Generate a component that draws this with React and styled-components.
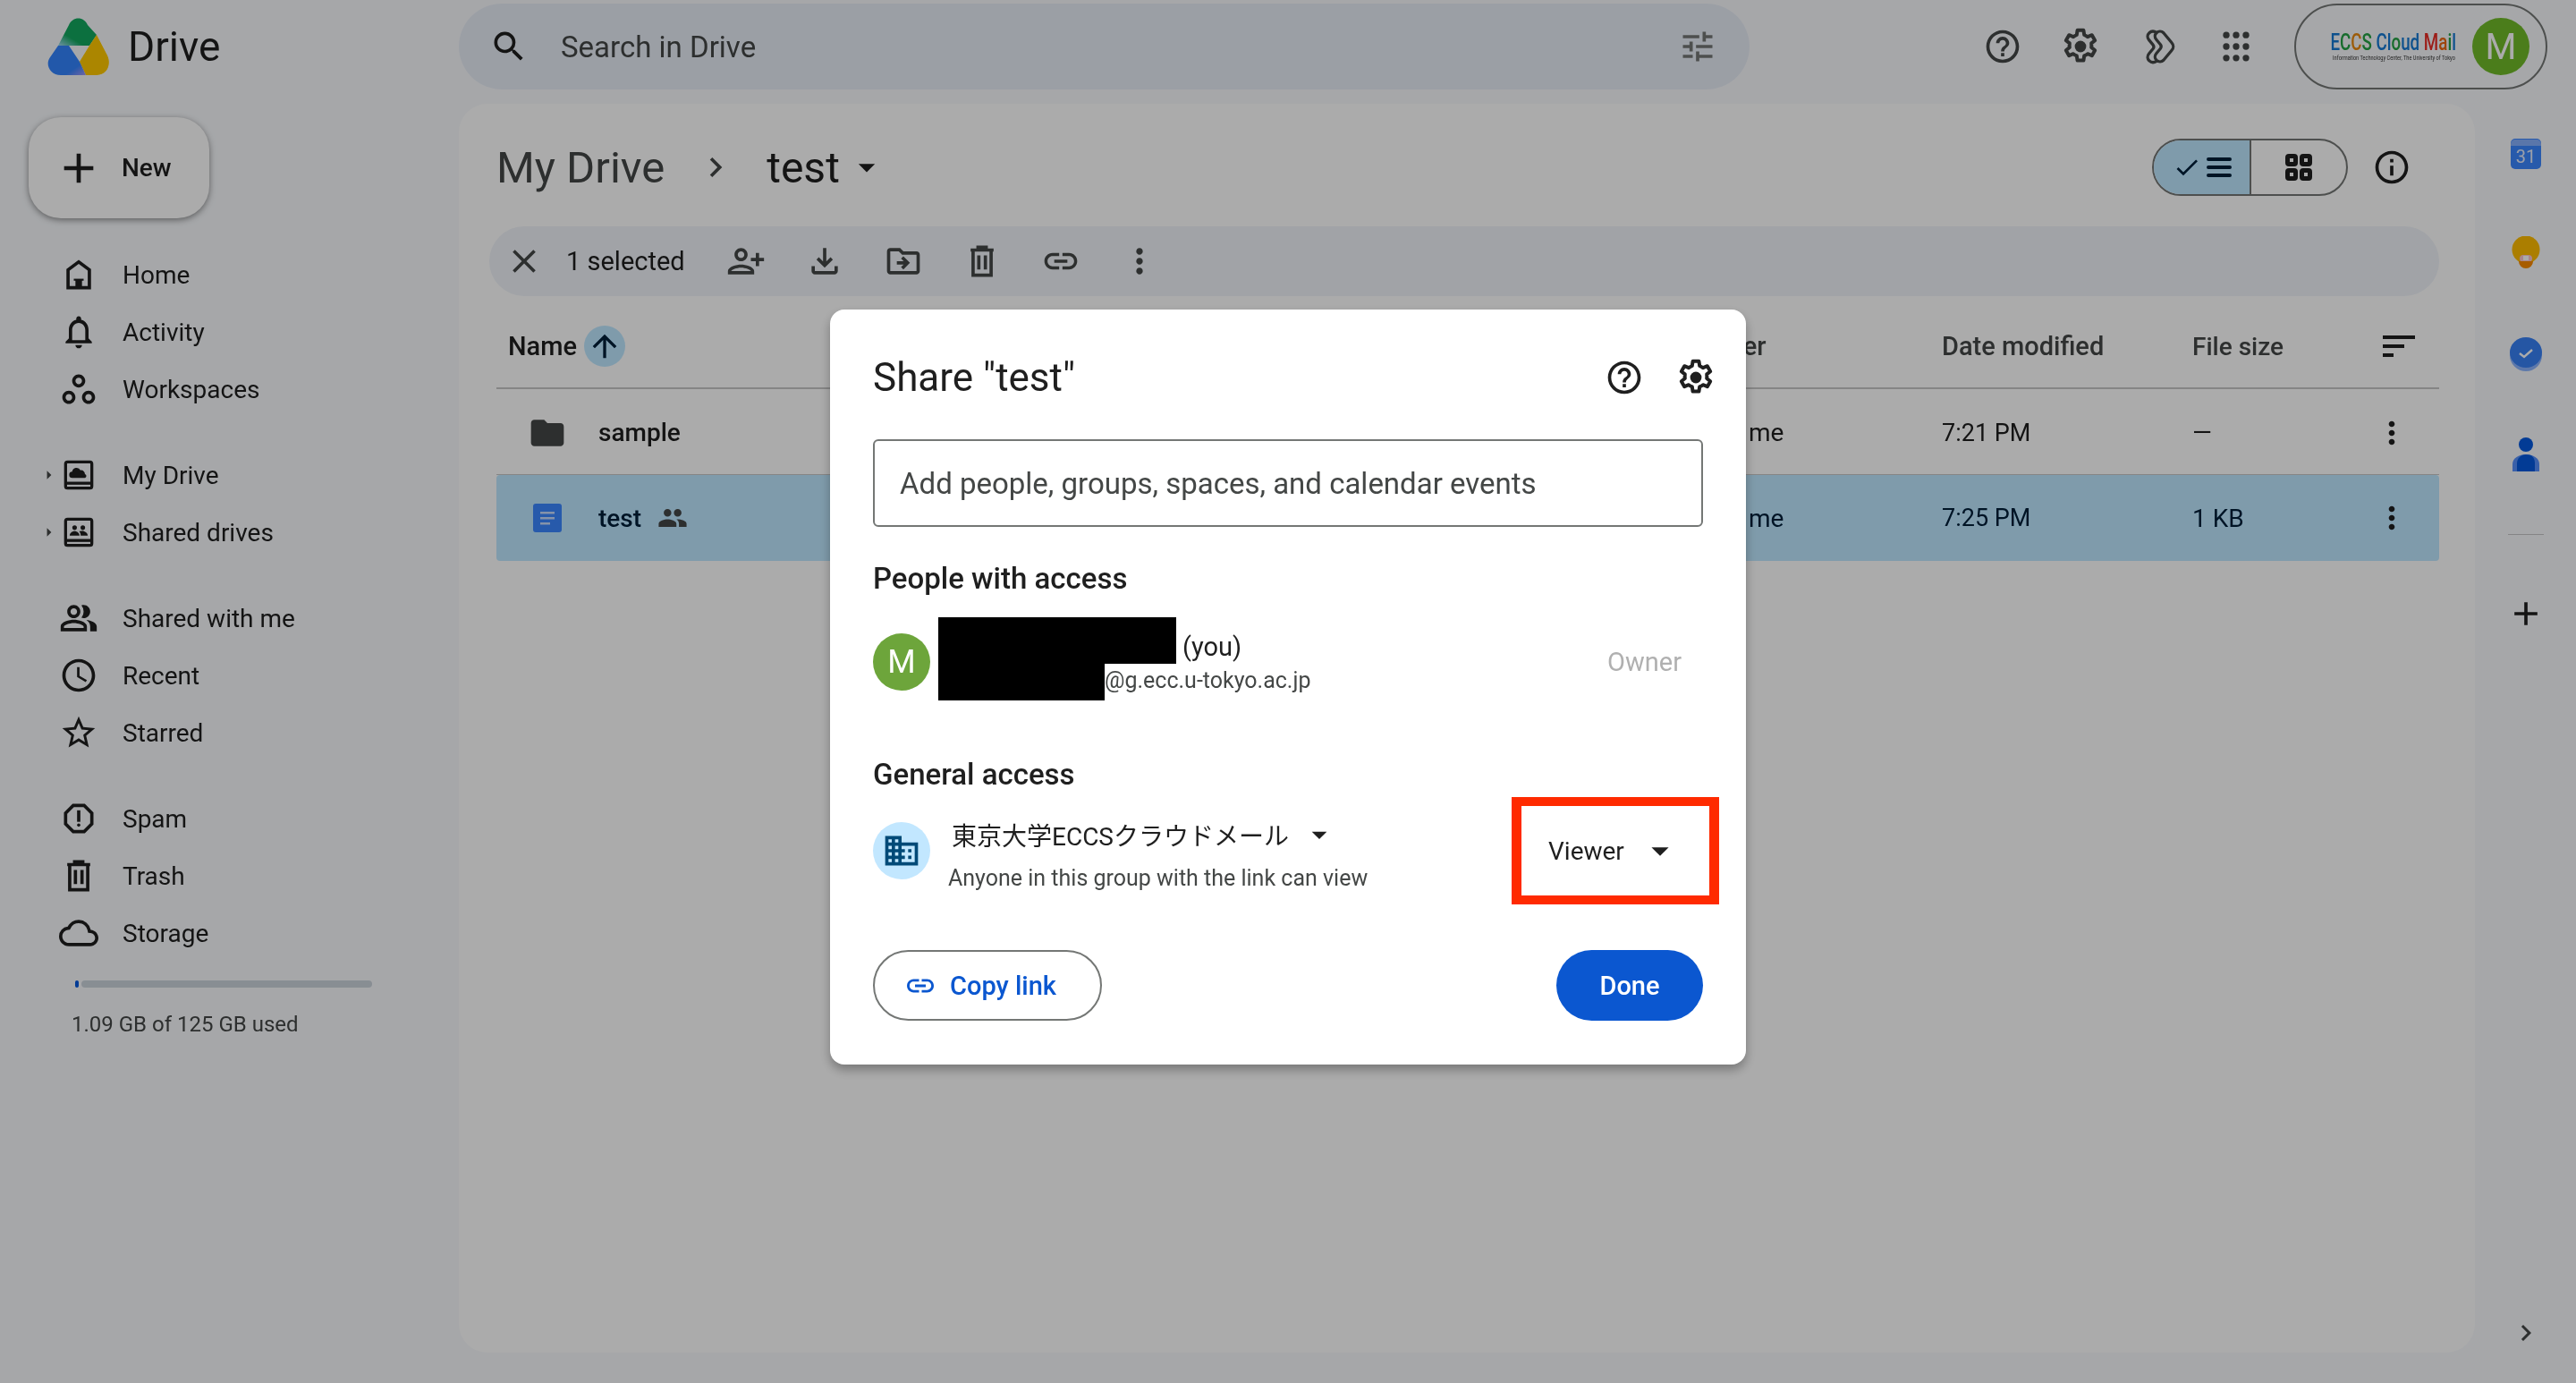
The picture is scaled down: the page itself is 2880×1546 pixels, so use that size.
import React from 'react'
import styled, { createGlobalStyle } from 'styled-components'
import {
  MdAdd,
  MdSearch,
  MdTune,
  MdHelpOutline,
  MdOutlineNotifications,
  MdOutlineWorkspaces,
  MdOutlinePeopleAlt,
  MdAccessTime,
  MdStarBorder,
  MdOutlineReport,
  MdOutlineCloud,
  MdClose,
  MdPersonAddAlt,
  MdOutlineFileDownload,
  MdOutlineDriveFileMove,
  MdLink,
  MdMoreVert,
  MdFolder,
  MdPeople,
  MdArrowUpward,
  MdCheck,
  MdInfoOutline,
  MdArrowDropDown,
  MdArrowRight,
  MdChevronRight,
  MdDomain,
} from 'react-icons/md'

const FONT = `Roboto, "Noto Sans CJK JP", sans-serif`

const GlobalStyle = createGlobalStyle`
  html, body {
    margin: 0;
    height: 100%;
    overflow: hidden;
    background: #f8fafd;
  }
  * {
    box-sizing: border-box;
  }
`

const Page = styled.div`
  width: 2880px;
  height: 1546px;
  display: grid;
  grid-template-columns: 513px 1fr 113px;
  grid-template-rows: 116px 1fr;
  font-family: ${FONT};
  color: #1f1f1f;
  background: #f8fafd;
`

/* ---------- header ---------- */

const Header = styled.header`
  grid-column: 1 / 4;
  display: flex;
  align-items: center;
  padding-bottom: 12px;
  padding-right: 32px;
`

const Brand = styled.div`
  width: 513px;
  padding-left: 53px;
  display: flex;
  align-items: center;
  gap: 21px;
  font-size: 46px;
  color: #1f1f1f;
`

const SearchBar = styled.div`
  width: 1443px;
  height: 96px;
  border-radius: 48px;
  background: #e9eef6;
  display: flex;
  align-items: center;
  padding: 0 36px 0 34px;
  font-size: 33px;
  color: #444746;
`

const SearchText = styled.span`
  flex: 1;
  margin-left: 36px;
`

const HeaderActions = styled.div`
  margin-left: auto;
  display: flex;
  align-items: center;
  gap: 43px;
`

const IconSlot = styled.span`
  display: inline-flex;
  align-items: center;
  justify-content: center;
  flex: none;
  color: ${(p) => p.$color || '#444746'};
  font-size: ${(p) => p.$size || 44}px;
  width: ${(p) => p.$size || 44}px;
  height: ${(p) => p.$size || 44}px;
`

const AccountPill = styled.div`
  width: 283px;
  height: 96px;
  border: 2px solid #747775;
  border-radius: 48px;
  display: flex;
  align-items: center;
  justify-content: space-between;
  padding: 0 18px 0 43px;
  background: #f8fafd;
`

const EccsLogo = styled.div`
  width: 132px;
  display: flex;
  flex-direction: column;
  align-items: center;
`

const EccsName = styled.div`
  font-size: 25px;
  line-height: 26px;
  font-weight: 500;
  white-space: nowrap;
  transform: scaleX(0.75);
`

const EccsLetter = styled.span`
  color: ${(p) => p.$c};
`

const EccsSub = styled.div`
  font-size: 7px;
  line-height: 9px;
  color: #333;
  white-space: nowrap;
  transform: scaleX(0.8);
`

const Avatar = styled.div`
  width: 64px;
  height: 64px;
  border-radius: 50%;
  background: ${(p) => p.$bg || '#6da53b'};
  color: #fff;
  font-size: ${(p) => p.$font || 36}px;
  display: flex;
  align-items: center;
  justify-content: center;
  flex: none;
`

/* ---------- sidebar ---------- */

const Sidebar = styled.nav`
  padding-top: 15px;
`

const NewButton = styled.div`
  width: 202px;
  height: 113px;
  margin-left: 32px;
  margin-bottom: 31px;
  border-radius: 36px;
  background: #fff;
  box-shadow: 0 2px 6px rgba(0, 0, 0, 0.35), 0 2px 12px rgba(0, 0, 0, 0.12);
  display: flex;
  align-items: center;
  gap: 20px;
  padding-left: 28px;
  font-size: 28px;
  font-weight: 500;
`

const NavGroup = styled.div`
  margin-bottom: 32px;
`

const NavRow = styled.div`
  height: 64px;
  padding-left: 43px;
  display: flex;
  align-items: center;
  font-size: 28px;
  color: #1f1f1f;
`

const CaretSlot = styled.span`
  width: 23px;
  display: inline-flex;
  align-items: center;
  justify-content: center;
  font-size: 30px;
  color: #444746;
`

const NavLabel = styled.span`
  margin-left: 27px;
`

const StorageBar = styled.div`
  width: 332px;
  height: 8px;
  margin: -11px 0 0 84px;
  display: flex;
  gap: 3px;
`

const StorageUsed = styled.div`
  width: 4px;
  border-radius: 2px;
  background: #0b57d0;
`

const StorageFree = styled.div`
  flex: 1;
  border-radius: 4px;
  background: #ccd4db;
`

const StorageText = styled.div`
  margin: 24px 0 0 80px;
  font-size: 24px;
  line-height: 34px;
  color: #444746;
`

/* ---------- main panel ---------- */

const MainPanel = styled.main`
  margin-bottom: 34px;
  padding: 5px 40px 0 42px;
  background: #fff;
  border-radius: 32px;
`

const TitleRow = styled.div`
  height: 132px;
  display: flex;
  align-items: center;
`

const Crumb = styled.span`
  font-size: ${(p) => p.$muted ? 49 : 48}px;
  color: ${(p) => p.$muted ? '#444746' : '#1f1f1f'};
`

const CrumbChevron = styled.span`
  display: inline-flex;
  margin: 0 35px;
  font-size: 44px;
  color: #444746;
`

const CrumbCaret = styled.span`
  display: inline-flex;
  margin-left: 8px;
`

const ViewToggle = styled.div`
  margin-left: auto;
  width: 219px;
  height: 64px;
  border: 2px solid #747775;
  border-radius: 32px;
  overflow: hidden;
  display: grid;
  grid-template-columns: 109px 1fr;
`

const ToggleHalf = styled.div`
  display: flex;
  align-items: center;
  justify-content: center;
  gap: 6px;
  background: ${(p) => p.$active ? '#c2e7ff' : 'transparent'};
  border-right: ${(p) => p.$active ? '2px solid #747775' : 'none'};
  color: ${(p) => p.$active ? '#001d35' : '#1f1f1f'};
`

const InfoSlot = styled.div`
  margin: 0 31px 0 27px;
  display: flex;
`

const Toolbar = styled.div`
  height: 78px;
  margin-left: -8px;
  padding-left: 17px;
  border-radius: 39px;
  background: #f0f4f9;
  display: flex;
  align-items: center;
  font-size: 29px;
  color: #444746;
`

const SelectedText = styled.span`
  margin: 0 28px 0 25px;
  width: 151px;
  white-space: nowrap;
  color: #1f1f1f;
`

const ToolIcons = styled.div`
  display: flex;
  gap: 44px;
`

const tableColumns = '1330px 286px 280px 170px 106px'

const TableHead = styled.div`
  height: 104px;
  padding-top: 10px;
  border-bottom: 2px solid #c7c7c7;
  display: grid;
  grid-template-columns: ${tableColumns};
  align-items: center;
  font-size: 29px;
  font-weight: 500;
  color: #444746;
`

const NameHead = styled.div`
  display: flex;
  align-items: center;
  padding-left: 13px;
  gap: 8px;
  color: #1f1f1f;
`

const OwnerHead = styled.div`
  padding-left: 6px;
`

const SizeHead = styled.div`
  font-size: 28px;
`

const SortBadge = styled.span`
  width: 46px;
  height: 46px;
  border-radius: 50%;
  background: #c2e7ff;
  color: #001d35;
  display: inline-flex;
  align-items: center;
  justify-content: center;
  font-size: 40px;
`

const SortLines = styled.div`
  display: flex;
  flex-direction: column;
  gap: 6px;
  margin-left: 43px;
  align-items: flex-start;
`

const SortLine = styled.div`
  height: 4px;
  background: #1f1f1f;
  width: ${(p) => p.$w}px;
`

const FileRow = styled.div`
  height: 96px;
  padding-top: ${(p) => p.$selected ? 0 : 2}px;
  display: grid;
  grid-template-columns: ${tableColumns};
  align-items: center;
  font-size: 28px;
  border-radius: ${(p) => p.$selected ? '4px' : '0'};
  background: ${(p) => p.$selected ? '#c2e7ff' : 'transparent'};
  color: ${(p) => p.$selected ? '#001d35' : '#1f1f1f'};
  border-bottom: ${(p) => p.$selected ? 'none' : '1px solid #c7c7c7'};
`

const NameCell = styled.div`
  display: flex;
  align-items: center;
  padding-left: 35px;
  gap: 35px;
  font-weight: 500;
`

const SharedMark = styled.span`
  display: inline-flex;
  margin-left: -17px;
`

const OwnerCell = styled.div`
  padding-left: 70px;
`

const DateCell = styled.div`
  font-size: 27px;
`

const ActionCell = styled.div`
  display: flex;
  justify-content: center;
`

/* ---------- right rail ---------- */

const Rail = styled.aside`
  display: flex;
  flex-direction: column;
  align-items: center;
`

const RailSlot = styled.div`
  height: 112px;
  width: 100%;
  display: flex;
  align-items: center;
  justify-content: center;
`

const RailDivider = styled.div`
  width: 40px;
  height: 1px;
  margin: 33px 0 32px;
  background: #c7c7c7;
`

const RailBottom = styled.div`
  margin-top: auto;
  margin-bottom: 38px;
  font-size: 36px;
  display: flex;
  color: #444746;
`

/* ---------- dialog ---------- */

const Scrim = styled.div`
  position: fixed;
  inset: 0;
  padding-bottom: 10px;
  background: rgba(0, 0, 0, 0.33);
  backdrop-filter: saturate(1.12);
  display: flex;
  align-items: center;
  justify-content: center;
  font-family: ${FONT};
`

const Dialog = styled.div`
  width: 1024px;
  height: 844px;
  padding: 26px 48px 0;
  background: #fff;
  border-radius: 16px;
  box-shadow: 0 6px 12px rgba(0, 0, 0, 0.3);
  color: #1f1f1f;
`

const DialogTop = styled.div`
  height: 100px;
  display: flex;
  align-items: center;
`

const DialogTitle = styled.h2`
  flex: 1;
  margin: 0;
  font-size: 44px;
  font-weight: 400;
`

const DialogIcons = styled.div`
  display: flex;
  gap: 36px;
  margin-right: -14px;
`

const PeopleInput = styled.div`
  height: 98px;
  margin-top: 19px;
  padding-left: 28px;
  border: 2px solid #747775;
  border-radius: 6px;
  display: flex;
  align-items: center;
  font-size: 33px;
  color: #444746;
`

const SectionTitle = styled.h3`
  margin: ${(p) => p.$top}px 0 0;
  height: 40px;
  line-height: 40px;
  font-size: 33px;
  font-weight: 500;
`

const PersonRow = styled.div`
  height: 93px;
  margin-top: 23px;
  display: flex;
`

const AvatarWrap = styled.div`
  margin-top: 18px;
`

const PersonInfo = styled.div`
  margin-left: 9px;
  display: flex;
  flex-direction: column;
`

const NameLine = styled.div`
  display: flex;
  height: 52px;
  align-items: flex-end;
  font-size: 29px;
`

const MailLine = styled.div`
  display: flex;
  height: 41px;
  align-items: center;
  font-size: 25px;
  color: #444746;
`

const Redaction = styled.div`
  width: ${(p) => p.$w}px;
  height: 100%;
  background: #000;
  flex: none;
`

const MailText = styled.span`
  padding-bottom: 5px;
`

const YouText = styled.span`
  margin-left: 7px;
  line-height: 32px;
  padding-bottom: 3px;
`

const OwnerRole = styled.span`
  margin: 18px 24px 0 auto;
  height: 64px;
  display: flex;
  align-items: center;
  font-size: 29px;
  color: #b0b0b0;
`

const AccessRow = styled.div`
  height: 120px;
  margin-top: 5px;
  margin-right: -18px;
  display: flex;
  align-items: center;
`

const OrgIcon = styled.div`
  width: 64px;
  height: 64px;
  border-radius: 50%;
  background: #c2e7ff;
  color: #004a77;
  display: flex;
  align-items: center;
  justify-content: center;
  font-size: 44px;
  flex: none;
`

const AccessInfo = styled.div`
  flex: 1;
  margin: 10px 0 0 20px;
  display: flex;
  flex-direction: column;
  gap: 12px;
`

const OrgName = styled.div`
  height: 40px;
  padding-left: 4px;
  display: flex;
  align-items: center;
  font-size: 28px;
`

const OrgCaret = styled.span`
  display: inline-flex;
  margin-left: 14px;
  font-size: 40px;
`

const AccessHint = styled.div`
  height: 34px;
  line-height: 34px;
  font-size: 25px;
  color: #444746;
`

/* the red frame is the annotation the author drew around the role picker */
const RolePicker = styled.div`
  width: 232px;
  height: 120px;
  padding-left: 30px;
  border: solid #ff2a00;
  border-width: 10px 11px;
  display: flex;
  align-items: center;
  font-size: 28px;
`

const RoleCaret = styled.span`
  display: inline-flex;
  margin-left: 17px;
  font-size: 46px;
`

const DialogButtons = styled.div`
  margin-top: 51px;
  display: flex;
  justify-content: space-between;
`

const CopyButton = styled.div`
  width: 256px;
  height: 79px;
  border: 2px solid #747775;
  border-radius: 40px;
  display: flex;
  align-items: center;
  gap: 15px;
  padding-left: 33px;
  font-size: 29px;
  font-weight: 500;
  color: #0b57d0;
`

const DoneButton = styled.div`
  width: 164px;
  height: 79px;
  border-radius: 40px;
  background: #0b57d0;
  color: #fff;
  display: flex;
  align-items: center;
  justify-content: center;
  font-size: 29px;
  font-weight: 500;
`

/* ---------- drawn icons ---------- */

const DriveLogo = () => (
  <svg width="69" height="65" viewBox="0 0 69 65">
    <defs>
      <linearGradient id="lg-green" x1="0" y1="1" x2="0.5" y2="0.4">
        <stop offset="0" stopColor="#a8d8f0" />
        <stop offset="0.55" stopColor="#1fa463" />
      </linearGradient>
      <linearGradient id="lg-blue" x1="0.4" y1="0.3" x2="1" y2="1">
        <stop offset="0.6" stopColor="#3b82f0" />
        <stop offset="1" stopColor="#a99bf0" />
      </linearGradient>
    </defs>
    <path d="M12 31 24 8C28 -2 41 -2 45 8L55 19 47 31Z" fill="url(#lg-green)" />
    <path d="M55 19 67 42C72 53 66 64 55 64H43L36 49 47 31Z" fill="#fdc800" />
    <path d="M12 31H24L36 49 43 64H15C3 64 -3 52 3 44Z" fill="url(#lg-blue)" />
  </svg>
)

const HomeIcon = () => (
  <svg width="44" height="44" viewBox="0 0 24 24" fill="currentColor">
    <path d="M12 3 4.500 8.600V21h15V8.600L12 3Zm5.500 16h-11V9.600L12 5.500l5.500 4.100V19Z" />
    <rect x="10" y="15" width="4" height="5" />
    <rect x="9" y="14.500" width="6" height="1.200" />
  </svg>
)

const DriveBox = ({ children }) => (
  <svg width="44" height="44" viewBox="0 0 24 24" fill="none" stroke="currentColor" strokeWidth="1.800">
    <rect x="4" y="4" width="16" height="16" rx="1.200" />
    <path d="M4 17h16" />
    {children}
  </svg>
)

const MyDriveIcon = () => (
  <DriveBox>
    <path
      d="M8.200 13.800a1.900 1.900 0 0 1-.2-3.800 2.700 2.700 0 0 1 5.100-.9 2.300 2.300 0 0 1 2.700 2.300 1.300 1.300 0 0 1 .1 2.400Z"
      fill="currentColor"
      stroke="none"
    />
  </DriveBox>
)

const SharedDrivesIcon = () => (
  <DriveBox>
    <g fill="currentColor" stroke="none">
      <circle cx="9.500" cy="9.200" r="1.400" />
      <circle cx="14.500" cy="9.200" r="1.400" />
      <path d="M6.500 14c0-1.500 1.500-2.700 3-2.700s3 1.200 3 2.700ZM13.200 14c0-1-.3-1.900-.9-2.500.7-.2 2.200-.4 3-.1 1.200.3 2.200 1.300 2.200 2.600Z" />
    </g>
  </DriveBox>
)

const GearIcon = () => (
  <svg width="44" height="44" viewBox="1 1 22 22" fill="none" stroke="currentColor" strokeWidth="2" strokeLinejoin="round">
    <path d="M10.300 2.900h3.400l.4 2.600c.7.300 1.300.6 1.900 1.100l2.400-1 1.700 3-2 1.600c.1.800.1 1.500 0 2.300l2 1.600-1.700 3-2.400-1c-.6.500-1.200.8-1.900 1.100l-.4 2.600h-3.400l-.4-2.600c-.7-.3-1.300-.6-1.900-1.100l-2.400 1-1.700-3 2-1.600c-.1-.8-.1-1.500 0-2.300l-2-1.600 1.700-3 2.400 1c.6-.5 1.200-.8 1.900-1.100l.4-2.600Z" />
    <circle cx="12" cy="12" r="3.200" fill="currentColor" stroke="none" />
  </svg>
)

const GeminiIcon = () => (
  <svg width="44" height="44" viewBox="0 0 24 24" fill="none" stroke="currentColor" strokeWidth="1.800" strokeLinejoin="round" strokeLinecap="round">
    <path d="M11 3.500c1.200-1 3-1 4.200.2l5 6c1.200 1.300 1.200 3.300 0 4.600l-5 6c-1.200 1.200-3 1.200-4.200.2-1.300-1.200-1.300-3-.2-4.300l2.500-3c.6-.8.6-1.600 0-2.400l-2.500-3c-1.100-1.300-1.100-3.100.2-4.300Z" />
    <path d="M11 3.500C9.500 2.500 7.700 2.500 6.500 3.700 5.200 4.900 5.200 6.700 6.300 8l2.500 3c.6.8.6 1.600 0 2.400l-2.500 3c-1.100 1.300-1.100 3.100.2 4.300 1.200 1.200 3 1.200 4.500.2" />
  </svg>
)

const AppsIcon = () => (
  <svg width="44" height="44" viewBox="0 0 24 24" fill="currentColor">
    {[5, 12, 19].map((cy) =>
      [6, 12, 18].map((cx) => <circle key={`${cx}-${cy}`} cx={cx} cy={cy} r="2" />),
    )}
  </svg>
)

const TrashIcon = () => (
  <svg width="44" height="44" viewBox="0 0 24 24" fill="none" stroke="currentColor" strokeWidth="2">
    <path d="M5 5.200h14M9.500 5V3.400h5V5M6.500 5.200V20.500h11V5.200" />
    <path d="M10 8.500v8.500M14 8.500v8.500" />
  </svg>
)

const ListBars = () => (
  <svg width="28" height="24" viewBox="0 0 28 24" fill="none" stroke="currentColor" strokeWidth="4" strokeLinecap="round">
    <path d="M2 3h24M2 12h24M2 21h24" />
  </svg>
)

const GridSquares = () => (
  <svg width="30" height="30" viewBox="0 0 30 30" fill="none" stroke="currentColor" strokeWidth="5">
    <rect x="2.500" y="2.500" width="9" height="9" rx="1.500" />
    <rect x="18.500" y="2.500" width="9" height="9" rx="1.500" />
    <rect x="2.500" y="18.500" width="9" height="9" rx="1.500" />
    <rect x="18.500" y="18.500" width="9" height="9" rx="1.500" />
  </svg>
)

const DocsIcon = () => (
  <svg width="32" height="32" viewBox="0 0 32 32">
    <rect width="32" height="32" rx="3" fill="#4285f4" />
    <path d="M8 9h16v2.600H8zM8 15h16v2.600H8zM8 21h11v2.600H8z" fill="#c9dcf9" />
  </svg>
)

const CalendarIcon = () => (
  <svg width="34" height="34" viewBox="0 0 34 34">
    <rect width="34" height="34" rx="5" fill="#4285f4" />
    <path d="M0 6a5 5 0 0 1 5-5h24a5 5 0 0 1 5 5v2H0Z" fill="#8ab0f5" />
    <text x="17" y="27" textAnchor="middle" fontSize="20" fontFamily="Roboto, sans-serif" fill="#e8eefb">31</text>
  </svg>
)

const KeepIcon = () => (
  <svg width="32" height="40" viewBox="0 0 32 40">
    <circle cx="16" cy="15" r="15.500" fill="#fbbc04" />
    <rect x="9" y="21" width="14" height="8" rx="4" fill="#f8c8d0" />
    <path d="M8 28h16a8 8 0 0 1-16 0Z" fill="#ee8a00" />
    <rect x="13" y="22" width="6" height="5" fill="#fff" />
  </svg>
)

const TasksIcon = () => (
  <svg width="36" height="38" viewBox="0 0 36 38">
    <ellipse cx="18" cy="20" rx="18" ry="18" fill="#8fb4f6" />
    <ellipse cx="18" cy="17" rx="18" ry="17" fill="#3f7fe8" />
    <path d="M11 18l5 4 9-8" fill="none" stroke="#fff" strokeWidth="2.400" />
  </svg>
)

const ContactsIcon = () => (
  <svg width="30" height="38" viewBox="0 0 30 38">
    <circle cx="15" cy="8" r="8" fill="#0b57d0" />
    <path d="M0 38v-8c0-7 7-11 15-11s15 4 15 11v8Z" fill="#5b8ff0" />
    <path d="M5 38v-9c0-6 5-10 10-10 8 0 10 5 10 10v9Z" fill="#0b57d0" />
  </svg>
)

/* ---------- data ---------- */

const navGroups = [
  [
    [<HomeIcon />, 'Home'],
    [<MdOutlineNotifications />, 'Activity'],
    [<MdOutlineWorkspaces />, 'Workspaces'],
  ],
  [
    [<MyDriveIcon />, 'My Drive', true],
    [<SharedDrivesIcon />, 'Shared drives', true],
  ],
  [
    [<MdOutlinePeopleAlt />, 'Shared with me'],
    [<MdAccessTime />, 'Recent'],
    [<MdStarBorder />, 'Starred'],
  ],
  [
    [<MdOutlineReport />, 'Spam'],
    [<TrashIcon />, 'Trash'],
    [<MdOutlineCloud />, 'Storage'],
  ],
]

const eccsColours = [
  ['E', '#1f78c8'],
  ['C', '#2e9e4a'],
  ['C', '#e08a1e'],
  ['S', '#2e9e4a'],
  [' ', '#000'],
  ['C', '#1f78c8'],
  ['l', '#1f78c8'],
  ['o', '#2e9e4a'],
  ['u', '#1f78c8'],
  ['d', '#1f78c8'],
  [' ', '#000'],
  ['M', '#d9302a'],
  ['a', '#e06a1e'],
  ['i', '#2e9e4a'],
  ['l', '#1f78c8'],
]

const App = () => (
  <>
    <GlobalStyle />
    <Page>
      <Header>
        <Brand>
          <DriveLogo />
          Drive
        </Brand>
        <SearchBar>
          <IconSlot $size={44} $color="#1f1f1f"><MdSearch /></IconSlot>
          <SearchText>Search in Drive</SearchText>
          <IconSlot $color="#747775"><MdTune /></IconSlot>
        </SearchBar>
        <HeaderActions>
          <IconSlot><MdHelpOutline /></IconSlot>
          <IconSlot><GearIcon /></IconSlot>
          <IconSlot><GeminiIcon /></IconSlot>
          <IconSlot><AppsIcon /></IconSlot>
          <AccountPill>
            <EccsLogo>
              <EccsName>
                {eccsColours.map(([ch, c], i) => (
                  <EccsLetter key={i} $c={c}>{ch}</EccsLetter>
                ))}
              </EccsName>
              <EccsSub>Information Technology Center, The University of Tokyo</EccsSub>
            </EccsLogo>
            <Avatar $bg="#76b836" $font={40}>M</Avatar>
          </AccountPill>
        </HeaderActions>
      </Header>

      <Sidebar>
        <NewButton>
          <IconSlot $size={56} $color="#1f1f1f"><MdAdd /></IconSlot>
          New
        </NewButton>
        {navGroups.map((group, i) => (
          <NavGroup key={i}>
            {group.map(([icon, label, expandable]) => (
              <NavRow key={label}>
                <CaretSlot>{expandable && <MdArrowRight />}</CaretSlot>
                <IconSlot $color="#1f1f1f">{icon}</IconSlot>
                <NavLabel>{label}</NavLabel>
              </NavRow>
            ))}
          </NavGroup>
        ))}
        <StorageBar>
          <StorageUsed />
          <StorageFree />
        </StorageBar>
        <StorageText>1.09 GB of 125 GB used</StorageText>
      </Sidebar>

      <MainPanel>
        <TitleRow>
          <Crumb $muted>My Drive</Crumb>
          <CrumbChevron><MdChevronRight /></CrumbChevron>
          <Crumb>test</Crumb>
          <CrumbCaret>
            <IconSlot $color="#1f1f1f"><MdArrowDropDown /></IconSlot>
          </CrumbCaret>
          <ViewToggle>
            <ToggleHalf $active>
              <IconSlot $size={32} $color="#001d35"><MdCheck /></IconSlot>
              <ListBars />
            </ToggleHalf>
            <ToggleHalf>
              <GridSquares />
            </ToggleHalf>
          </ViewToggle>
          <InfoSlot>
            <IconSlot $color="#1f1f1f"><MdInfoOutline /></IconSlot>
          </InfoSlot>
        </TitleRow>

        <Toolbar>
          <IconSlot><MdClose /></IconSlot>
          <SelectedText>1 selected</SelectedText>
          <ToolIcons>
            <IconSlot><MdPersonAddAlt /></IconSlot>
            <IconSlot><MdOutlineFileDownload /></IconSlot>
            <IconSlot><MdOutlineDriveFileMove /></IconSlot>
            <IconSlot><TrashIcon /></IconSlot>
            <IconSlot><MdLink /></IconSlot>
            <IconSlot><MdMoreVert /></IconSlot>
          </ToolIcons>
        </Toolbar>

        <TableHead>
          <NameHead>
            Name
            <SortBadge><MdArrowUpward /></SortBadge>
          </NameHead>
          <OwnerHead>Owner</OwnerHead>
          <div>Date modified</div>
          <SizeHead>File size</SizeHead>
          <SortLines>
            <SortLine $w={36} />
            <SortLine $w={24} />
            <SortLine $w={12} />
          </SortLines>
        </TableHead>

        <FileRow>
          <NameCell>
            <IconSlot $color="#444746"><MdFolder /></IconSlot>
            sample
          </NameCell>
          <OwnerCell>me</OwnerCell>
          <DateCell>7:21 PM</DateCell>
          <div>—</div>
          <ActionCell>
            <IconSlot $size={40} $color="#1f1f1f"><MdMoreVert /></IconSlot>
          </ActionCell>
        </FileRow>
        <FileRow $selected>
          <NameCell>
            <IconSlot><DocsIcon /></IconSlot>
            test
            <SharedMark>
              <IconSlot $size={34} $color="#444746"><MdPeople /></IconSlot>
            </SharedMark>
          </NameCell>
          <OwnerCell>me</OwnerCell>
          <DateCell>7:25 PM</DateCell>
          <div>1 KB</div>
          <ActionCell>
            <IconSlot $size={40} $color="#1f1f1f"><MdMoreVert /></IconSlot>
          </ActionCell>
        </FileRow>
      </MainPanel>

      <Rail>
        <RailSlot><CalendarIcon /></RailSlot>
        <RailSlot><KeepIcon /></RailSlot>
        <RailSlot><TasksIcon /></RailSlot>
        <RailSlot><ContactsIcon /></RailSlot>
        <RailDivider />
        <RailSlot><IconSlot $color="#1f1f1f"><MdAdd /></IconSlot></RailSlot>
        <RailBottom><MdChevronRight /></RailBottom>
      </Rail>
    </Page>

    <Scrim>
      <Dialog>
        <DialogTop>
          <DialogTitle>Share "test"</DialogTitle>
          <DialogIcons>
            <IconSlot $color="#1f1f1f"><MdHelpOutline /></IconSlot>
            <IconSlot $color="#1f1f1f"><GearIcon /></IconSlot>
          </DialogIcons>
        </DialogTop>
        <PeopleInput>Add people, groups, spaces, and calendar events</PeopleInput>

        <SectionTitle $top={38}>People with access</SectionTitle>
        <PersonRow>
          <AvatarWrap><Avatar>M</Avatar></AvatarWrap>
          <PersonInfo>
            <NameLine>
              <Redaction $w={266} />
              <YouText>(you)</YouText>
            </NameLine>
            <MailLine>
              <Redaction $w={186} />
              <MailText>@g.ecc.u-tokyo.ac.jp</MailText>
            </MailLine>
          </PersonInfo>
          <OwnerRole>Owner</OwnerRole>
        </PersonRow>

        <SectionTitle $top={63}>General access</SectionTitle>
        <AccessRow>
          <OrgIcon><MdDomain /></OrgIcon>
          <AccessInfo>
            <OrgName>
              東京大学ECCSクラウドメール
              <OrgCaret><MdArrowDropDown /></OrgCaret>
            </OrgName>
            <AccessHint>Anyone in this group with the link can view</AccessHint>
          </AccessInfo>
          <RolePicker>
            Viewer
            <RoleCaret><MdArrowDropDown /></RoleCaret>
          </RolePicker>
        </AccessRow>

        <DialogButtons>
          <CopyButton>
            <IconSlot $size={36} $color="#0b57d0"><MdLink /></IconSlot>
            Copy link
          </CopyButton>
          <DoneButton>Done</DoneButton>
        </DialogButtons>
      </Dialog>
    </Scrim>
  </>
)

export default App
